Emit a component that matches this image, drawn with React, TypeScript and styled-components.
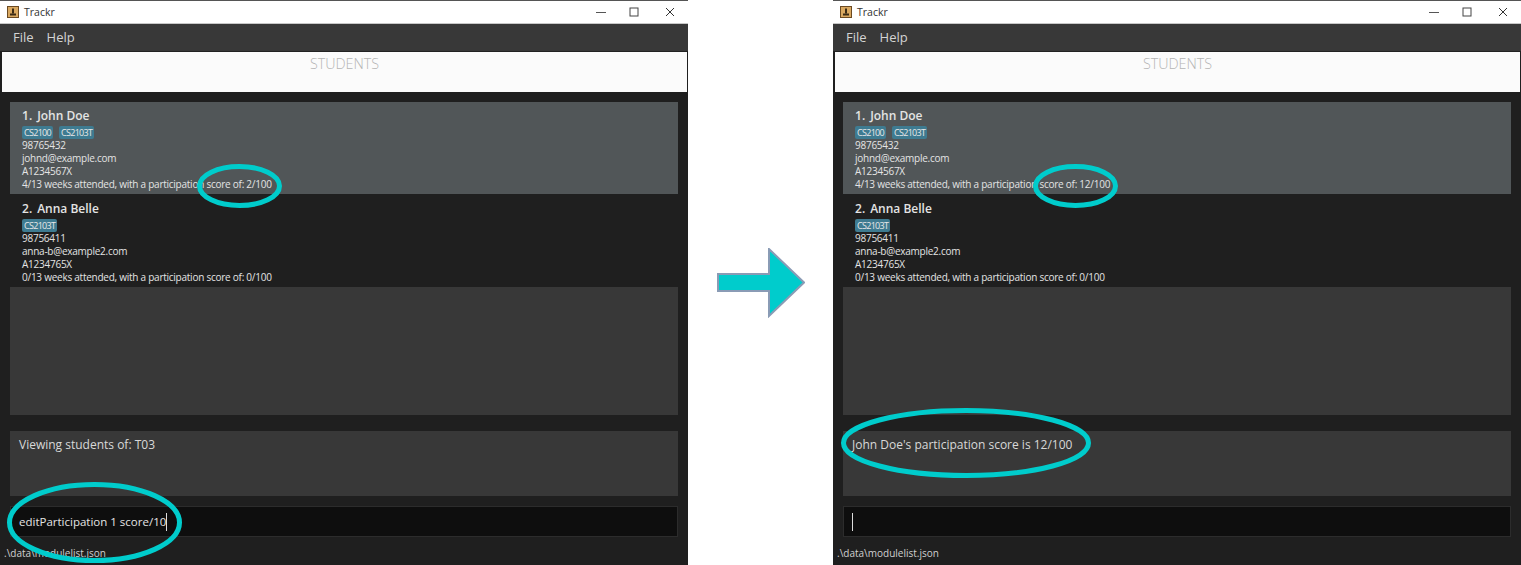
import React from "react"
import styled, { createGlobalStyle } from "styled-components"

const GlobalStyle = createGlobalStyle`
    html, body {
        margin: 0;
        padding: 0;
        background: #fff;
    }
    * {
        box-sizing: border-box;
    }
`

const Page = styled.div`
    width: 1521px;
    height: 565px;
    display: flex;
    align-items: flex-start;
    overflow: hidden;
    background: #fff;
    font-family: "Open Sans", "Noto Sans", sans-serif;
`

const Window = styled.div`
    position: relative;
    width: 688px;
    height: 565px;
    flex: none;
    display: flex;
    flex-direction: column;
    background: #1f1f1f;
    border-top: 1px solid #555;
`

const TitleBar = styled.div`
    height: 23px;
    flex: none;
    display: flex;
    align-items: center;
    padding-left: 7px;
    background: #fff;
    border-bottom: 1px solid #c8c8c8;
    color: #333;
    font-size: 10.5px;
`

const TitleText = styled.span`
    margin-left: 5px;
    flex: 1;
`

const WindowButton = styled.span<{ $width: number }>`
    width: ${p => p.$width}px;
    height: 22px;
    display: flex;
    align-items: center;
    justify-content: center;
`

const MenuBar = styled.div`
    height: 27px;
    flex: none;
    display: flex;
    align-items: center;
    gap: 13px;
    padding: 0 0 2px 13px;
    background: #383838;
    color: #d4d4d4;
    font-size: 13px;
`

const Header = styled.div`
    height: 41px;
    flex: none;
    margin: 0 1px 0 2px;
    padding-top: 2px;
    text-align: center;
    background: #fbfbfb;
    border-top: 1px solid #222;
    color: #b4b4b4;
    font-size: 14.3px;
    font-weight: 300;
`

const List = styled.div`
    height: 313px;
    flex: none;
    margin: 10px 10px 0;
    display: flex;
    flex-direction: column;
    background: #383838;
`

const Card = styled.div<{ $selected?: boolean }>`
    height: ${p => (p.$selected ? 92 : 93)}px;
    flex: none;
    padding: ${p => (p.$selected ? 5 : 6)}px 12px 0;
    background: ${p => (p.$selected ? "#515658" : "#1f1f1f")};
    color: #e4e4e4;
    font-size: 10px;
    letter-spacing: -0.25px;
    line-height: 13px;
`

const Name = styled.div`
    height: 17px;
    display: flex;
    gap: 5px;
    color: #e4e4e4;
    font-size: 12px;
    font-weight: 600;
    letter-spacing: 0;
    line-height: 17px;
`

const Tags = styled.div`
    display: flex;
    gap: 6px;
    margin: 2px 0 0;
`

const Tag = styled.span`
    height: 13px;
    padding: 0 2px;
    border-radius: 2px;
    background: #3e7b91;
    color: #e8e8e8;
    font-size: 9px;
    letter-spacing: -0.7px;
    line-height: 13px;
`

const ResultBox = styled.div`
    height: 65px;
    flex: none;
    margin: 16px 10px 0;
    padding: 5px 9px;
    background: #383838;
    color: #d8d8d8;
    font-size: 12px;
    line-height: 18px;
`

const CommandBox = styled.div`
    height: 31px;
    flex: none;
    margin: 10px 10px 0;
    padding-left: 8px;
    display: flex;
    align-items: center;
    background: #0e0e0e;
    border: 1px solid #2c2c2c;
    color: #e4e4e4;
    font-size: 11.5px;
`

const Caret = styled.span`
    width: 1px;
    height: 18px;
    background: #ddd;
`

const StatusBar = styled.div`
    margin-top: 9px;
    padding-left: 4px;
    color: #d0d0d0;
    font-size: 10px;
    line-height: 15px;
`

const ArrowSlot = styled.div`
    width: 145px;
    height: 565px;
    flex: none;
    display: flex;
    align-items: flex-start;
    justify-content: center;
    padding-top: 248px;
`

const Ring = styled.svg<{ $x: number; $y: number }>`
    position: absolute;
    left: ${p => p.$x}px;
    top: ${p => p.$y}px;
    overflow: visible;
`

function AppIcon() {
    return (
        <svg width="12" height="12" viewBox="0 0 12 12">
            <rect x="0.5" y="0.5" width="11" height="11" fill="#d9a860" stroke="#6b4a22" />
            <rect x="5" y="2.5" width="2" height="5" fill="#3b2a14" />
            <rect x="3" y="7.5" width="6" height="2" fill="#3b2a14" />
        </svg>
    )
}

// ellipse given by its outer box in window coordinates
function Ellipse({ x, y, w, h }: { x: number; y: number; w: number; h: number }) {
    return (
        <Ring $x={x} $y={y} width={w} height={h} viewBox={`0 0 ${w} ${h}`}>
            <ellipse cx={w / 2} cy={h / 2} rx={w / 2 - 2.5} ry={h / 2 - 2.5} fill="none" stroke="#00cccc" strokeWidth="5" />
        </Ring>
    )
}

interface Student {
    index: number
    name: string
    tags: string[]
    phone: string
    email: string
    matric: string
    weeks: number
    score: number
}

function StudentCard({ student, selected }: { student: Student; selected?: boolean }) {
    return (
        <Card $selected={selected}>
            <Name>
                <span>{student.index}.</span>
                <span>{student.name}</span>
            </Name>
            <Tags>
                {student.tags.map(t => (
                    <Tag key={t}>{t}</Tag>
                ))}
            </Tags>
            <div>{student.phone}</div>
            <div>{student.email}</div>
            <div>{student.matric}</div>
            <div>
                {student.weeks}/13 weeks attended, with a participation score of: {student.score}/100
            </div>
        </Card>
    )
}

function TrackrWindow({ score, result, command, children }: { score: number; result: string; command: string; children: React.ReactNode }) {
    const students: Student[] = [
        { index: 1, name: "John Doe", tags: ["CS2100", "CS2103T"], phone: "98765432", email: "johnd@example.com", matric: "A1234567X", weeks: 4, score },
        { index: 2, name: "Anna Belle", tags: ["CS2103T"], phone: "98756411", email: "anna-b@example2.com", matric: "A1234765X", weeks: 0, score: 0 },
    ]
    return (
        <Window>
            <TitleBar>
                <AppIcon />
                <TitleText>Trackr</TitleText>
                <WindowButton $width={30}>
                    <svg width="10" height="10" viewBox="0 0 10 10"><path d="M0 5.5h10" stroke="#555" /></svg>
                </WindowButton>
                <WindowButton $width={36}>
                    <svg width="10" height="10" viewBox="0 0 10 10"><rect x="1" y="1" width="8" height="8" fill="none" stroke="#444" /></svg>
                </WindowButton>
                <WindowButton $width={36}>
                    <svg width="10" height="10" viewBox="0 0 10 10"><path d="M1 1l8 8M9 1l-8 8" stroke="#333" /></svg>
                </WindowButton>
            </TitleBar>
            <MenuBar>
                <span>File</span>
                <span>Help</span>
            </MenuBar>
            <Header>STUDENTS</Header>
            <List>
                {students.map((s, i) => (
                    <StudentCard key={s.index} student={s} selected={i === 0} />
                ))}
            </List>
            <ResultBox>{result}</ResultBox>
            <CommandBox>
                {command}
                <Caret />
            </CommandBox>
            <StatusBar>.\data\modulelist.json</StatusBar>
            {children}
        </Window>
    )
}

export default function App() {
    return (
        <Page>
            <GlobalStyle />
            <TrackrWindow score={2} result="Viewing students of: T03" command="editParticipation 1 score/10">
                <Ellipse x={197} y={163} w={85} h={44} />
                <Ellipse x={7} y={481} w={175} h={81} />
            </TrackrWindow>
            <ArrowSlot>
                <svg width="88" height="70" viewBox="0 0 88 70">
                    <path d="M1 26H52V1L87 34.5L52 68V43H1Z" fill="#00cccc" stroke="#8a9bb5" strokeWidth="2" />
                </svg>
            </ArrowSlot>
            <TrackrWindow score={12} result="John Doe's participation score is 12/100" command="">
                <Ellipse x={200} y={163} w={85} h={44} />
                <Ellipse x={8} y={407} w={250} h={70} />
            </TrackrWindow>
        </Page>
    )
}
